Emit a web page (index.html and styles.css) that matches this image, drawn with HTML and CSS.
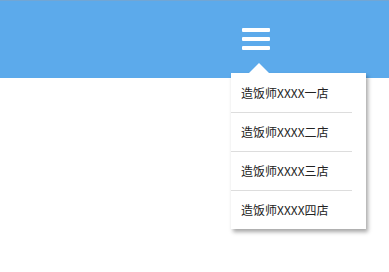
FILE: index.html
```html
<!DOCTYPE html>
<html lang="zh">
<head>
    <meta charset="UTF-8">
    <meta name="viewport" content="width=device-width, initial-scale=1.0">
    <title>门店选择</title>
    <link rel="stylesheet" href="styles.css">
</head>
<body>
    <div class="header">
        <div class="menu-wrap">
            <button class="menu-btn">
                <span class="bar"></span>
                <span class="bar"></span>
                <span class="bar"></span>
            </button>
            <div class="dropdown">
                <div class="dropdown-item">造饭师XXXX一店</div>
                <div class="dropdown-item">造饭师XXXX二店</div>
                <div class="dropdown-item">造饭师XXXX三店</div>
                <div class="dropdown-item">造饭师XXXX四店</div>
            </div>
        </div>
    </div>
</body>
</html>
```

FILE: styles.css
```css
html, body {
    height: 100%;
}
body {
    margin: 0;
    padding: 0;
    min-height: 272px;
    background-color: #fff;
    font-family: "Noto Sans CJK SC", "Liberation Sans", sans-serif;
    color: #222;
}
.header {
    height: 77px;
    background-color: #5caaeb;
    border-top: 1px solid #72a6d4;
    display: flex;
    padding-left: 242px;
}
.menu-wrap {
    position: relative;
}
.menu-btn {
    display: flex;
    flex-direction: column;
    gap: 5px;
    margin-top: 27px;
    padding: 0;
    width: 28px;
    background: none;
    border: none;
    cursor: pointer;
}
.bar {
    display: block;
    height: 4px;
    width: 28px;
    background-color: #fff;
    border-radius: 1px;
}

/* dropdown menu */
.dropdown {
    position: absolute;
    top: 72px;
    left: -11px;
    width: 135px;
    padding-top: 1px;
    background-color: #fff;
    box-shadow: 2px 3px 4px rgba(0, 0, 0, 0.35);
    z-index: 10;
}
.dropdown::before {
    content: "";
    position: absolute;
    top: -10px;
    left: 18px;
    border-left: 10px solid transparent;
    border-right: 10px solid transparent;
    border-bottom: 10px solid #fff;
}
.dropdown-item {
    height: 38px;
    line-height: 38px;
    padding-left: 10px;
    margin-right: 14px;
    font-size: 12px;
    color: #222;
    border-bottom: 1px solid #ddd;
}
.dropdown-item:last-child {
    border-bottom: none;
}
```
